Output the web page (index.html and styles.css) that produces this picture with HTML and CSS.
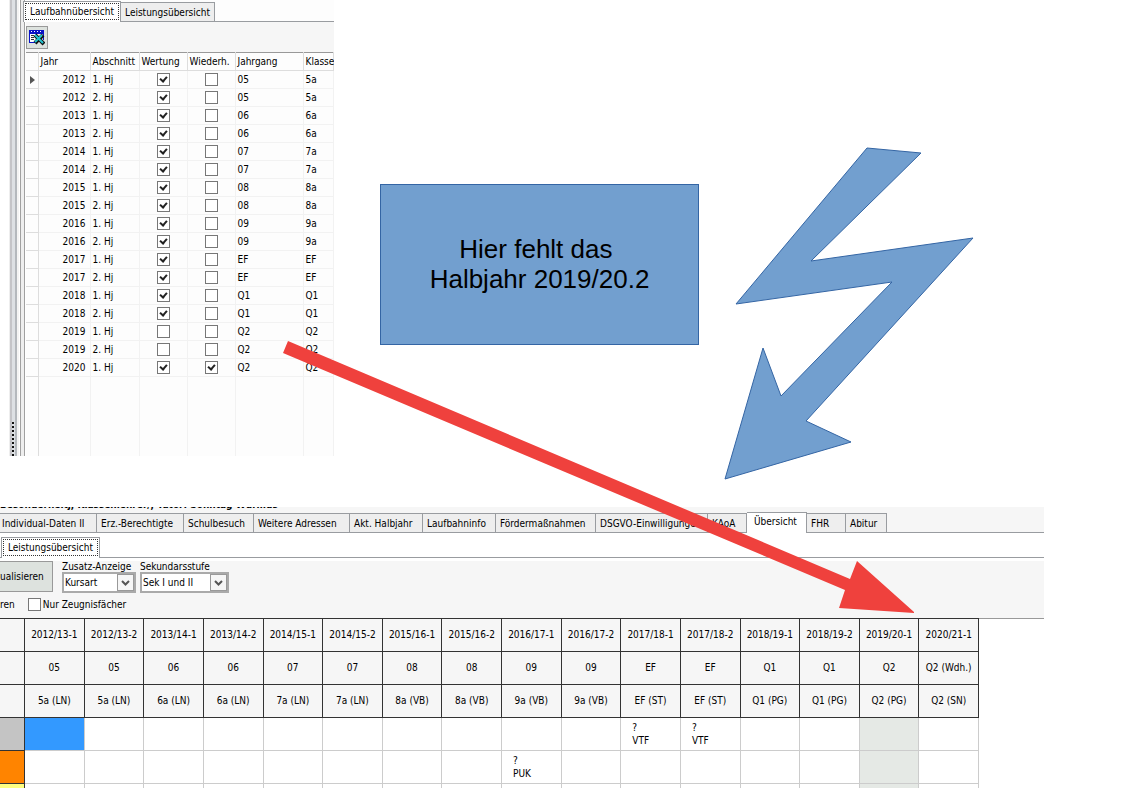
FILE: index.html
```
<!DOCTYPE html>
<html lang="de">
<head>
    <meta charset="UTF-8">
    <meta name="viewport" content="width=device-width, initial-scale=1.0">
    <title>Laufbahnübersicht</title>
    <link rel="stylesheet" href="styles.css">
</head>
<body>
    <main class="board">
        <div class="top-row">
            <section class="career">
                <div class="splitter"><span class="grip"></span></div>
                <div class="career-body">
                    <div class="tabs" role="tablist">
                        <button class="tab tab-active tab-focus" role="tab">Laufbahnübersicht</button>
                        <button class="tab" role="tab">Leistungsübersicht</button>
                    </div>
                    <div class="toolbar">
                        <button class="export" aria-label="Excel-Export">
                            <svg width="16" height="16" viewBox="0 0 16 16">
                                <path fill="#fff" d="M0 1h14v12H0z"/>
                                <path fill="#0a12c8" d="M0 0h15v4H0zM0 4h1v9H0zM14 4h1v6h-1zM0 12h8v1H0z"/>
                                <path fill="#fff" d="M2 1h1v1H2zM5 1h1v1H5zM8 1h1v1H8zM11 1h1v1h-1z"/>
                                <path fill="#333" d="M2 5h3v1H2zM2 7h3v1H2zM2 9h3v1H2zM11 5h2v1h-2z"/>
                                <path stroke="#111" stroke-width="4" d="M6 5l9 9M14 5l-8 8"/>
                                <path stroke="#23c4cf" stroke-width="2" d="M6 5l8 8M13 5l-7 7"/>
                            </svg>
                        </button>
                    </div>
                    <table class="career-table">
                        <colgroup>
                            <col class="c-mark"><col class="c-year"><col class="c-term"><col class="c-check"><col class="c-check"><col class="c-grade"><col>
                        </colgroup>
                        <thead>
                            <tr><th></th><th>Jahr</th><th>Abschnitt</th><th>Wertung</th><th>Wiederh.</th><th>Jahrgang</th><th>Klasse</th></tr>
                        </thead>
                        <tbody id="career-rows"></tbody>
                    </table>
                </div>
            </section>

            <div class="note">Hier fehlt das&nbsp;<br>Halbjahr 2019/20.2</div>

            <svg class="bolt" width="252" height="334" viewBox="0 0 252 334">
                <path d="M143 2L197 7L87 115L249 92L82 275L127 296L1 333L39 202L57 250L168 136L12 158Z"/>
            </svg>
        </div>

        <section class="overview">
            <div class="cut-line">Besonderheitj, Klassenlehrer/, Tutor: Sonntag-Wurmus</div>
            <nav class="tabs main-tabs" id="main-tabs" role="tablist"></nav>
            <div class="tabs sub-tabs">
                <button class="tab tab-active tab-focus">Leistungsübersicht</button>
            </div>
            <form class="filters">
                <div class="filter-row">
                    <button type="button" class="refresh">ualisieren</button>
                    <div class="field">
                        <label for="extra">Zusatz-Anzeige</label>
                        <div class="select-box">
                            <select id="extra" class="select-extra"><option>Kursart</option></select>
                            <span class="drop"><svg width="9" height="6" viewBox="0 0 9 6"><path d="M1 1l3.500 3.500L8 1"/></svg></span>
                        </div>
                    </div>
                    <div class="field">
                        <label for="level">Sekundarsstufe</label>
                        <div class="select-box">
                            <select id="level" class="select-level"><option>Sek I und II</option></select>
                            <span class="drop"><svg width="9" height="6" viewBox="0 0 9 6"><path d="M1 1l3.500 3.500L8 1"/></svg></span>
                        </div>
                    </div>
                </div>
                <div class="option-row">
                    <span>ren</span>
                    <label class="option"><input type="checkbox" class="check">Nur Zeugnisfächer</label>
                </div>
            </form>
            <div class="grades-area">
                <table class="grades">
                    <colgroup><col class="g-subject"></colgroup>
                    <thead id="grades-head"></thead>
                    <tbody id="grades-body"></tbody>
                </table>
            </div>
        </section>

        <svg class="pointer" width="632" height="273" viewBox="0 0 632 273">
            <path d="M6 0L568 238L575 220L633 272L557 267L563 249L1 12Z"/>
        </svg>
    </main>

    <script>
        const careerRows = [
            [2012, 1, "05", "5a"], [2012, 2, "05", "5a"],
            [2013, 1, "06", "6a"], [2013, 2, "06", "6a"],
            [2014, 1, "07", "7a"], [2014, 2, "07", "7a"],
            [2015, 1, "08", "8a"], [2015, 2, "08", "8a"],
            [2016, 1, "09", "9a"], [2016, 2, "09", "9a"],
            [2017, 1, "EF", "EF"], [2017, 2, "EF", "EF"],
            [2018, 1, "Q1", "Q1"], [2018, 2, "Q1", "Q1"],
            [2019, 1, "Q2", "Q2"], [2019, 2, "Q2", "Q2"],
            [2020, 1, "Q2", "Q2"]
        ];

        // Halves of 2019 do not count, 2020 is the repeated one
        const box = (label, on) => `<input type="checkbox" class="check" aria-label="${label}"${on ? " checked" : ""}>`;
        document.getElementById("career-rows").innerHTML = careerRows.map(([year, half, grade, cls], i) => `
            <tr>
                <td>${i === 0 ? '<span class="marker"></span>' : ""}</td>
                <td class="year">${year}</td>
                <td>${half}. Hj</td>
                <td class="center">${box("Wertung", year !== 2019)}</td>
                <td class="center">${box("Wiederholung", year === 2020)}</td>
                <td>${grade}</td>
                <td>${cls}</td>
            </tr>`).join("") + `<tr class="filler">${"<td></td>".repeat(7)}</tr>`;

        const tabs = ["Individual-Daten II", "Erz.-Berechtigte", "Schulbesuch", "Weitere Adressen", "Akt. Halbjahr",
            "Laufbahninfo", "Fördermaßnahmen", "DSGVO-Einwilligungen", "KAoA", "Übersicht", "FHR", "Abitur"];
        const tabWidths = [100, 87, 70, 96, 73, 73, 100, 112, 39, 60, 39, 41];
        document.getElementById("main-tabs").innerHTML = tabs.map((name, i) =>
            `<button class="tab${name === "Übersicht" ? " tab-active" : ""}" role="tab" style="width:${tabWidths[i]}px">${name}</button>`).join("");

        const terms = ["2012/13-1", "2012/13-2", "2013/14-1", "2013/14-2", "2014/15-1", "2014/15-2", "2015/16-1", "2015/16-2",
            "2016/17-1", "2016/17-2", "2017/18-1", "2017/18-2", "2018/19-1", "2018/19-2", "2019/20-1", "2020/21-1"];
        const grades = ["05", "05", "06", "06", "07", "07", "08", "08", "09", "09", "EF", "EF", "Q1", "Q1", "Q2", "Q2 (Wdh.)"];
        const classes = ["5a (LN)", "5a (LN)", "6a (LN)", "6a (LN)", "7a (LN)", "7a (LN)", "8a (VB)", "8a (VB)",
            "9a (VB)", "9a (VB)", "EF (ST)", "EF (ST)", "Q1 (PG)", "Q1 (PG)", "Q2 (PG)", "Q2 (SN)"];
        document.getElementById("grades-head").innerHTML = [terms, grades, classes].map(row =>
            `<tr><th></th>${row.map(text => `<th>${text}</th>`).join("")}</tr>`).join("");

        const subjects = [
            { color: "gray", courses: { 10: "VTF", 11: "VTF" } },
            { color: "orange", courses: { 8: "PUK" } },
            { color: "yellow", courses: {} }
        ];
        document.getElementById("grades-body").innerHTML = subjects.map((subject, r) =>
            `<tr><td class="${subject.color}"></td>${terms.map((term, c) => {
                const state = r === 0 && c === 0 ? "selected" : term === "2019/20-1" ? "skipped" : "";
                return `<td class="${state}">${subject.courses[c] ? "?<br>" + subject.courses[c] : ""}</td>`;
            }).join("")}</tr>`).join("");
    </script>
</body>
</html>
```
FILE: styles.css
```
* {
    box-sizing: border-box;
}

body {
    margin: 0;
    background-color: #fff;
    color: #000;
    font-family: "DejaVu Sans Condensed", "DejaVu Sans", sans-serif;
    font-size: 10px;
    line-height: 13px;
}

button, select, input {
    margin: 0;
    font: inherit;
    color: inherit;
}

.board {
    position: relative;
    overflow: hidden;
}

.top-row {
    display: flex;
    align-items: flex-start;
    margin-bottom: 27px;
}

/* Career panel */
.career {
    display: flex;
    flex: none;
    width: 334px;
    padding-left: 9px;
    overflow: hidden;
}

.splitter {
    display: flex;
    align-items: flex-end;
    width: 17px;
    background: linear-gradient(to right, #eee 0 1px, #c4c4c8 1px 3px, #dde0e4 3px 6px, #b4b8bd 6px 8px, #f4f4f4 8px 10px, #fff 10px 11px, #a0a0a0 11px 12px, #eee 12px 15px, #a0a0a0 15px 16px, #fff 16px);
}

.grip {
    width: 2px;
    height: 34px;
    margin-left: 3px;
    background: repeating-linear-gradient(to bottom, #111 0 2px, transparent 2px 4px);
}

.career-body {
    flex: 1;
    min-width: 0;
    background-color: #fdfdfd;
}

.tabs {
    display: flex;
    align-items: flex-end;
    border-bottom: 1px solid #999ca0;
}

.career-body .tabs {
    height: 22px;
    margin-left: -3px;
}

.tab {
    flex: none;
    height: 19px;
    padding: 0 4px;
    border: 1px solid #999ca0;
    border-bottom: 0;
    background-color: #eee;
    text-align: left;
    white-space: nowrap;
}

.tab + .tab {
    border-left: 0;
}

.tab-active {
    height: 21px;
    margin-bottom: -1px;
    background-color: #fff;
}

.tab-focus {
    padding: 0 6px 2px;
    outline: 1px dotted #333;
    outline-offset: -3px;
}

.toolbar {
    height: 30px;
    padding: 4px 0;
    background-color: #f6f6f6;
}

.export {
    display: block;
    width: 22px;
    height: 23px;
    padding: 2px;
    border: 1px solid #999;
    background-color: #dde2de;
}

.export svg {
    display: block;
}

.career-table {
    width: 100%;
    table-layout: fixed;
    border-collapse: collapse;
    border-top: 1px solid #999;
    white-space: nowrap;
}

.c-mark { width: 12px; }
.c-year { width: 52px; }
.c-term { width: 49px; }
.c-check { width: 48px; }
.c-grade { width: 68px; }

.career-table th,
.career-table td {
    height: 18px;
    padding: 0 2px;
    border-right: 1px solid #f2f2f2;
    border-bottom: 1px solid #f2f2f2;
    text-align: left;
    font-weight: normal;
}

.career-table th {
    padding: 0 0 0 2px;
    border-color: #ddd;
}

.career-table td:first-child {
    padding: 0 4px;
    border-color: #ddd;
}

.career-table .year {
    padding-right: 4px;
    text-align: right;
}

.career-table .center {
    text-align: center;
}

.career-table .filler td {
    height: 79px;
    border-bottom: 0;
}

.marker {
    display: block;
    width: 5px;
    border: 4px solid transparent;
    border-left: 5px solid #555;
    border-right: 0;
}

.check {
    display: inline-grid;
    place-items: center;
    width: 13px;
    height: 13px;
    border: 1px solid #777;
    background-color: #fff;
    vertical-align: middle;
    appearance: none;
}

.check:checked::after {
    content: "";
    width: 3px;
    height: 5px;
    margin-bottom: 2px;
    border: solid #222;
    border-width: 0 2px 2px 0;
    transform: rotate(40deg);
}

/* Drawn shapes */
.note {
    display: flex;
    align-items: center;
    justify-content: center;
    width: 319px;
    height: 161px;
    margin: 184px 25px 0 46px;
    padding-bottom: 2px;
    border: 1px solid #3465a4;
    background-color: #729fcf;
    font-family: "Liberation Sans", Arial, sans-serif;
    font-size: 26px;
    line-height: 30px;
    text-align: center;
}

.bolt {
    flex: none;
    margin-top: 146px;
    fill: #729fcf;
    stroke: #3465a4;
}

.pointer {
    position: absolute;
    top: 341px;
    left: 282px;
    fill: #ef413d;
}

/* Overview panel */
.overview {
    max-width: 1044px;
    height: 281px;
    overflow: hidden;
    background-color: #f6f6f6;
}

.cut-line {
    display: flex;
    align-items: flex-end;
    height: 4px;
    overflow: hidden;
    font-weight: bold;
}

.main-tabs {
    height: 22px;
    margin-left: -3px;
}

.main-tabs .tab-active {
    padding: 0 7px 4px;
}

.sub-tabs {
    height: 25px;
    padding-left: 1px;
    background-color: #fff;
}

.filters {
    height: 60px;
    border-top: 3px solid #fff;
}

.filter-row {
    display: flex;
    gap: 4px;
    height: 35px;
}

.refresh {
    width: 53px;
    height: 31px;
    margin-right: 5px;
    padding: 0;
    border: 1px solid #999;
    border-left: 0;
    background-color: #dde2de;
    text-align: left;
}

.field {
    white-space: nowrap;
}

.field label {
    display: block;
    line-height: 11px;
}

.select-box {
    position: relative;
    display: flex;
}

.select-box select {
    height: 21px;
    padding: 0 20px 0 1px;
    border: 2px solid #aaa;
    border-radius: 0;
    background-color: #fff;
    appearance: none;
}

.select-extra { width: 74px; }
.select-level { width: 89px; }

.drop {
    position: absolute;
    top: 2px;
    right: 2px;
    display: grid;
    place-items: center;
    width: 17px;
    height: 17px;
    border: 1px solid #999;
    background-color: #f6f6f6;
    pointer-events: none;
}

.drop path {
    fill: none;
    stroke: #555;
    stroke-width: 2;
}

.option-row {
    display: flex;
    align-items: center;
    gap: 13px;
    height: 16px;
}

.option {
    display: flex;
    align-items: center;
    gap: 2px;
}

.grades-area {
    background-color: #fff;
    border-top: 1px solid #999;
}

.grades {
    width: 980px;
    margin: -1px 0 0 -1px;
    table-layout: fixed;
    border-collapse: collapse;
    white-space: nowrap;
}

.g-subject { width: 25px; }

.grades th,
.grades td {
    height: 33px;
    padding: 0;
    border: 1px solid #ccc;
    background-color: #fff;
    font-weight: normal;
}

.grades th {
    padding-bottom: 2px;
    border-color: #333;
    background-color: #f6f6f6;
}

.grades td {
    padding-left: 11px;
}

.grades .gray,
.grades .orange,
.grades .yellow {
    border-color: #333;
}

.grades .gray { background-color: #c4c4c4; }
.grades .orange { background-color: #ff8400; }
.grades .yellow { background-color: #ffff80; }
.grades .selected { background-color: #3399ff; }
.grades .skipped { background-color: #e5e9e5; }
```
